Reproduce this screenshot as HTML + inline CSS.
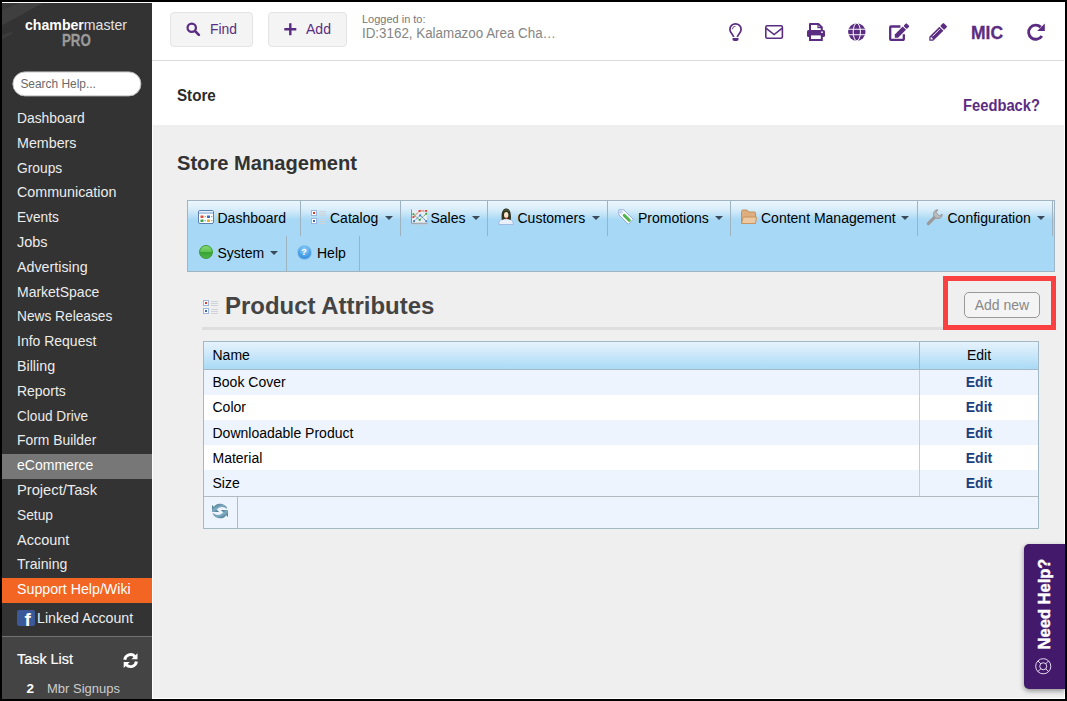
<!DOCTYPE html>
<html>
<head>
<meta charset="utf-8">
<title>Store</title>
<style>
*{box-sizing:border-box;margin:0;padding:0}
html,body{width:1067px;height:701px;overflow:hidden;background:#000;font-family:"Liberation Sans",sans-serif;}
.a{position:absolute}
.sx{display:inline-block;transform-origin:0 50%;white-space:nowrap}
#white{left:2px;top:2px;width:1063px;height:697px;background:#fff}
#side{left:2px;top:3px;width:150px;height:696px;background:#333;overflow:hidden}
#side2{left:0;top:633px;width:150px;height:63px;background:#444;border-top:1px solid #727272}
#grey{left:153px;top:125px;width:911px;height:573px;background:#efefef}
#topline{left:152px;top:60px;width:912px;height:1px;background:#dcdcdc}
.mi{position:absolute;left:0;width:150px;height:25px;padding-left:14.6px;font-size:15px;line-height:22px;color:#ececec;white-space:nowrap}
.btn{position:absolute;top:12px;height:35px;background:#f4f4f4;border:1px solid #e4e4e4;border-radius:4px}
.pt{color:#5b2d82}
svg{position:absolute;overflow:visible}
</style>
</head>
<body>
<div class="a" id="white"></div>
<div class="a" id="grey"></div>
<div class="a" id="topline"></div>

<div class="a" id="side">
<svg style="left:0;top:0" width="60" height="45" viewBox="0 0 60 45"><path d="M0 6.800L16.700 0H40.700L0 22.500Z" fill="#3f3f3f"/><path d="M0 0H16.700L0 6.800Z" fill="#383838"/><path d="M0 32.200L10 28.500L10.700 30.700L0 36Z" fill="#3c3c3c"/></svg>
<div class="a" id="side2"></div>
<div class="a" style="left:23.3px;top:13px;font-size:15px;line-height:17px;color:#fff;white-space:nowrap"><span class="sx" style="transform:scaleX(0.9412)"><b>chamber</b><span style="color:#e4e4e4">master</span></span></div>
<div class="a" style="left:60px;top:28.5px;font-size:17px;line-height:17px;color:#9a9a9a;font-weight:bold;white-space:nowrap;-webkit-text-stroke:0.3px #9a9a9a"><span class="sx" style="transform:scaleX(0.7818)">PRO</span></div>
<div class="a" style="left:10.5px;top:68px;transform:translate(-0.6px,0.4px);width:129px;height:25px;border-radius:13px;background:#fff;border:1px solid #bbb;color:#6a6a6a;font-size:12.5px;line-height:24.2px;padding-left:7.6px"><span class="sx" style="transform:scaleX(0.9532)">Search Help...</span></div>
<div class="mi" style="top:103.8px;"><span class="sx" style="transform:scaleX(0.9226)">Dashboard</span></div>
<div class="mi" style="top:128.8px;"><span class="sx" style="transform:scaleX(0.9518)">Members</span></div>
<div class="mi" style="top:153.8px;"><span class="sx" style="transform:scaleX(0.9189)">Groups</span></div>
<div class="mi" style="top:177.8px;"><span class="sx" style="transform:scaleX(0.9538)">Communication</span></div>
<div class="mi" style="top:202.8px;"><span class="sx" style="transform:scaleX(0.9115)">Events</span></div>
<div class="mi" style="top:227.8px;"><span class="sx" style="transform:scaleX(0.9658)">Jobs</span></div>
<div class="mi" style="top:252.8px;"><span class="sx" style="transform:scaleX(0.9515)">Advertising</span></div>
<div class="mi" style="top:277.8px;"><span class="sx" style="transform:scaleX(0.9324)">MarketSpace</span></div>
<div class="mi" style="top:301.8px;"><span class="sx" style="transform:scaleX(0.9145)">News Releases</span></div>
<div class="mi" style="top:326.8px;"><span class="sx" style="transform:scaleX(0.9323)">Info Request</span></div>
<div class="mi" style="top:351.8px;"><span class="sx" style="transform:scaleX(0.9520)">Billing</span></div>
<div class="mi" style="top:376.8px;"><span class="sx" style="transform:scaleX(0.9291)">Reports</span></div>
<div class="mi" style="top:401.8px;"><span class="sx" style="transform:scaleX(0.9073)">Cloud Drive</span></div>
<div class="mi" style="top:425.8px;"><span class="sx" style="transform:scaleX(0.9248)">Form Builder</span></div>
<div class="mi" style="top:450.8px;background:#777;color:#fff;"><span class="sx" style="transform:scaleX(0.9353)">eCommerce</span></div>
<div class="mi" style="top:475.8px;"><span class="sx" style="transform:scaleX(0.9793)">Project/Task</span></div>
<div class="mi" style="top:500.8px;"><span class="sx" style="transform:scaleX(0.9184)">Setup</span></div>
<div class="mi" style="top:525.8px;"><span class="sx" style="transform:scaleX(0.9668)">Account</span></div>
<div class="mi" style="top:549.8px;"><span class="sx" style="transform:scaleX(0.9378)">Training</span></div>
<div class="mi" style="top:574.8px;background:#f26522;color:#fff;"><span class="sx" style="transform:scaleX(0.9471)">Support Help/Wiki</span></div>
<div class="a" style="left:15px;top:607px;width:18px;height:15.8px;background:#3b5998;border-radius:2px;overflow:hidden"><div class="a" style="left:7.5px;top:-1px;font-size:19px;font-weight:bold;color:#fff;line-height:22px;font-family:'Liberation Sans',sans-serif">f</div></div>
<div class="mi" style="top:604px;left:20.1px"><span class="sx" style="transform:scaleX(0.9455)">Linked Account</span></div>
<div class="a" style="left:15px;top:645px;font-size:14px;line-height:22px;color:#fff;-webkit-text-stroke:0.2px #fff;white-space:nowrap"><span class="sx" style="transform:scaleX(1.0282)">Task List</span></div>
<svg style="left:120.6px;top:650.2px" width="15.2" height="15.2" viewBox="0 0 15 15" fill="none" stroke="#fff" stroke-width="2.9"><path d="M1.700 6.600A5.900 5.900 0 0 1 11.800 3.400"/><path d="M13.300 8.400A5.900 5.900 0 0 1 3.200 11.600"/><path d="M14.300 0.200V6.200H8.300z" fill="#fff" stroke="none"/><path d="M0.700 14.800V8.800H6.700z" fill="#fff" stroke="none"/></svg>
<div class="a" style="left:24.5px;top:677px;font-size:13.5px;line-height:18px;color:#fff;font-weight:bold">2</div>
<div class="a" style="left:45px;top:677px;font-size:13.5px;line-height:18px;color:#ccc;white-space:nowrap"><span class="sx" style="transform:scaleX(0.9632)">Mbr Signups</span></div>
</div>
<div class="btn" style="left:170px;width:83px"></div>
<svg style="left:186px;top:22px" width="14.6" height="14.6" viewBox="0 0 15 15" fill="none" stroke="#5b2d82"><circle cx="5.9" cy="5.9" r="4.3" stroke-width="2.3"/><path d="M9.4 9.4L13.2 13.2" stroke-width="2.8" stroke-linecap="round"/></svg>
<div class="a pt" style="left:210px;top:20px;font-size:15px;line-height:18px"><span class="sx" style="transform:scaleX(0.9253)">Find</span></div>
<div class="btn" style="left:268px;width:79px"></div>
<svg style="left:283.5px;top:22.6px" width="12.6" height="12.6" viewBox="0 0 13 13" stroke="#5b2d82" stroke-width="2.5"><path d="M6.5 0.3V12.7M0.3 6.5H12.7"/></svg>
<div class="a pt" style="left:306px;top:20px;font-size:15px;line-height:18px"><span class="sx" style="transform:scaleX(0.9367)">Add</span></div>
<div class="a" style="left:362px;top:12.5px;font-size:11px;line-height:13px;color:#777;white-space:nowrap"><span class="sx" style="transform:scaleX(0.9983)">Logged in to:</span></div>
<div class="a" style="left:362px;top:25px;font-size:14px;line-height:16px;color:#858585;white-space:nowrap"><span class="sx" style="transform:scaleX(0.9551)">ID:3162, Kalamazoo Area Cha…</span></div>
<svg id="i-bulb" style="left:729px;top:23px" width="13" height="18" viewBox="0 0 13 18"><path d="M4.600 14C4.400 11.600 0.900 9.900 0.900 6.400A5.600 5.600 0 0 1 12.100 6.400C12.100 9.900 8.600 11.600 8.400 14" fill="none" stroke="#5b2d82" stroke-width="1.700"/><path d="M3.500 15.100H9.500V16.200C9.500 17.300 8.700 17.900 7.600 17.900H5.400C4.300 17.900 3.500 17.300 3.500 16.200Z" fill="#5b2d82"/><path d="M3.400 6.300A3.100 3.100 0 0 1 6.500 3.300" fill="none" stroke="#5b2d82" stroke-width="0.900"/></svg>
<svg id="i-env" style="left:765px;top:25px" width="18.200" height="14" viewBox="0 0 18.200 14" fill="none" stroke="#5b2d82" stroke-width="1.600"><rect x="0.800" y="0.800" width="16.600" height="12.400" rx="1.500"/><path d="M1.200 3.400L9.100 9.600L17 3.400"/></svg>
<svg id="i-print" style="left:807px;top:23px" width="18" height="18" viewBox="0 0 18 18"><path d="M3 1H11.400L14.800 4.200V8.500H3Z" fill="#fff" stroke="#5b2d82" stroke-width="2" stroke-linejoin="round"/><path d="M11 1V4.600H14.800" fill="none" stroke="#5b2d82" stroke-width="1.200"/><rect x="0" y="7" width="18" height="7" rx="1.600" fill="#5b2d82"/><rect x="3" y="11.400" width="11.800" height="5.600" fill="#fff" stroke="#5b2d82" stroke-width="2"/><circle cx="15" cy="9.200" r="0.900" fill="#fff"/></svg>
<svg id="i-globe" style="left:848px;top:23px" width="17.600" height="18" viewBox="0 0 18 18"><circle cx="9" cy="9" r="8.900" fill="#5b2d82"/><g fill="none" stroke="#fff" stroke-width="1"><ellipse cx="9" cy="9" rx="3.700" ry="9"/><path d="M0 6.200H18M0 11.800H18"/></g></svg>
<svg id="i-edit" style="left:889px;top:23px" width="21" height="18" viewBox="0 0 21 18"><path d="M11.400 3.500H1.900A0.700 0.700 0 0 0 1.200 4.200V16.100A0.700 0.700 0 0 0 1.900 16.800H14.100A0.700 0.700 0 0 0 14.800 16.100V11.200" fill="none" stroke="#5b2d82" stroke-width="2.300"/><g transform="translate(5.800 14.700) rotate(-45)" fill="#5b2d82"><path d="M0 0L2.300 -2.300H13.500V2.300H2.300Z"/><rect x="14.500" y="-2.300" width="4" height="4.600" rx="0.900"/></g></svg>
<svg id="i-pencil" style="left:929px;top:23px" width="18.500" height="18" viewBox="0 0 18.500 18"><g transform="translate(0.300 17.800) rotate(-45)" fill="#5b2d82"><path d="M0 0L2.800 -2.800H17.100V2.800H2.800Z"/><rect x="18.100" y="-2.800" width="4.700" height="5.600" rx="1"/><path d="M1.700 0L3.900 -1.800V1.800Z" fill="#fff"/><path d="M5.500 -0.900H16" stroke="#fff" stroke-width="0.900"/></g></svg>
<div class="a pt" style="left:970.8px;top:23.2px;font-size:17.5px;font-weight:bold;line-height:20px;white-space:nowrap;-webkit-text-stroke:0.3px #5b2d82"><span class="sx" style="transform:scaleX(0.9976)">MIC</span></div>
<svg id="i-redo" style="left:1027px;top:23px" width="18" height="18" viewBox="0 0 18 18"><path d="M14.800 12.900A7.100 7.100 0 1 1 13.700 4.100" fill="none" stroke="#5b2d82" stroke-width="2.900"/><path d="M17.800 0.400V8H10.200Z" fill="#5b2d82"/></svg>
<div class="a" style="left:177px;top:86px;font-size:16px;font-weight:bold;line-height:20px;color:#2b2b2b;white-space:nowrap"><span class="sx" style="transform:scaleX(0.9487)">Store</span></div>
<div class="a pt" style="left:963px;top:96px;font-size:16px;font-weight:bold;line-height:20px;white-space:nowrap"><span class="sx" style="transform:scaleX(0.9212)">Feedback?</span></div>
<div class="a" style="left:177px;top:151px;font-size:20.5px;font-weight:bold;line-height:24px;color:#333;white-space:nowrap"><span class="sx" style="transform:scaleX(0.9815)">Store Management</span></div>
<div class="a" id="menubar" style="left:187px;top:200px;width:868px;height:72px;border:1px solid #9fb5c3;background:#a7d8f5 linear-gradient(#edf6fd 0,#d7ecfa 9px,#a7d8f5 19px)"></div>
<div class="a" style="left:300px;top:201px;width:1px;height:35px;background:#9db3c0"></div>
<div class="a" style="left:400px;top:201px;width:1px;height:35px;background:#9db3c0"></div>
<div class="a" style="left:487px;top:201px;width:1px;height:35px;background:#9db3c0"></div>
<div class="a" style="left:607px;top:201px;width:1px;height:35px;background:#9db3c0"></div>
<div class="a" style="left:730px;top:201px;width:1px;height:35px;background:#9db3c0"></div>
<div class="a" style="left:917px;top:201px;width:1px;height:35px;background:#9db3c0"></div>
<div class="a" style="left:1052px;top:201px;width:1px;height:35px;background:#9db3c0"></div>
<div class="a" style="left:286px;top:236px;width:1px;height:35px;background:#9db3c0"></div>
<div class="a" style="left:359px;top:236px;width:1px;height:35px;background:#9db3c0"></div>
<div class="a" style="left:217.5px;top:210px;font-size:14px;line-height:16px;color:#000;white-space:nowrap">Dashboard</div>
<div class="a" style="left:330px;top:210px;font-size:14px;line-height:16px;color:#000;white-space:nowrap">Catalog</div>
<div class="a" style="left:384.5px;top:215.5px;width:0;height:0;border-left:4.5px solid transparent;border-right:4.5px solid transparent;border-top:4.5px solid #3a4b5c"></div>
<div class="a" style="left:430.5px;top:210px;font-size:14px;line-height:16px;color:#000;white-space:nowrap">Sales</div>
<div class="a" style="left:471.5px;top:215.5px;width:0;height:0;border-left:4.5px solid transparent;border-right:4.5px solid transparent;border-top:4.5px solid #3a4b5c"></div>
<div class="a" style="left:517.5px;top:210px;font-size:14px;line-height:16px;color:#000;white-space:nowrap">Customers</div>
<div class="a" style="left:591.5px;top:215.5px;width:0;height:0;border-left:4.5px solid transparent;border-right:4.5px solid transparent;border-top:4.5px solid #3a4b5c"></div>
<div class="a" style="left:638px;top:210px;font-size:14px;line-height:16px;color:#000;white-space:nowrap">Promotions</div>
<div class="a" style="left:714.5px;top:215.5px;width:0;height:0;border-left:4.5px solid transparent;border-right:4.5px solid transparent;border-top:4.5px solid #3a4b5c"></div>
<div class="a" style="left:761px;top:210px;font-size:14px;line-height:16px;color:#000;white-space:nowrap">Content Management</div>
<div class="a" style="left:901px;top:215.5px;width:0;height:0;border-left:4.5px solid transparent;border-right:4.5px solid transparent;border-top:4.5px solid #3a4b5c"></div>
<div class="a" style="left:947.5px;top:210px;font-size:14px;line-height:16px;color:#000;white-space:nowrap">Configuration</div>
<div class="a" style="left:1036.5px;top:215.5px;width:0;height:0;border-left:4.5px solid transparent;border-right:4.5px solid transparent;border-top:4.5px solid #3a4b5c"></div>
<div class="a" style="left:217.5px;top:245px;font-size:14px;line-height:16px;color:#000;white-space:nowrap">System</div>
<div class="a" style="left:270px;top:250.5px;width:0;height:0;border-left:4.5px solid transparent;border-right:4.5px solid transparent;border-top:4.5px solid #3a4b5c"></div>
<div class="a" style="left:317px;top:245px;font-size:14px;line-height:16px;color:#000;white-space:nowrap">Help</div>
<svg style="left:198px;top:210px" width="16" height="14" viewBox="0 0 16 14"><rect x="0.5" y="0.5" width="15" height="13" rx="1.500" fill="#fff" stroke="#5b7fae"/><rect x="1" y="1" width="14" height="3" fill="#b3cbe9"/><rect x="1" y="1" width="14" height="1" fill="#e6eef8"/><rect x="2.500" y="5.500" width="3" height="2.500" fill="#e04b3a"/><rect x="2.500" y="9.500" width="3" height="2.500" fill="#3fa447"/><rect x="9" y="5.500" width="3" height="2.500" fill="#3b6fc4"/><rect x="9" y="9.500" width="3" height="2.500" fill="#f0a92c"/><path d="M6.500 6.700H8M6.500 10.700H8M13 6.700H14.500M13 10.700H14.500" stroke="#999" stroke-width="1"/></svg>
<svg style="left:311px;top:210px" width="15" height="14" viewBox="0 0 15 14" shape-rendering="crispEdges"><rect x="0.5" y="0.5" width="5" height="5" fill="#fff" stroke="#9db5db"/><rect x="2" y="2" width="2" height="2" fill="#e0392b"/><rect x="0.5" y="8.500" width="5" height="5" fill="#fff" stroke="#9db5db"/><rect x="2" y="10" width="2" height="2" fill="#3a67c0"/><g fill="#cdd3d9"><rect x="8" y="1" width="7" height="1"/><rect x="8" y="3" width="7" height="1"/><rect x="8" y="5" width="7" height="1"/><rect x="8" y="9" width="7" height="1"/><rect x="8" y="11" width="7" height="1"/><rect x="8" y="13" width="7" height="1"/></g></svg>
<svg style="left:411px;top:209px" width="17" height="16" viewBox="0 0 17 16" fill="none"><rect x="0.500" y="0.700" width="15.500" height="13.800" fill="#e6edf3"/><path d="M0.500 0.500V14.300H16.500" stroke="#8f9396" stroke-width="1"/><path d="M0.500 15.200H16.500" stroke="#c3c8cc" stroke-width="0.800"/><g stroke-width="1" stroke-dasharray="1.600 0.700"><path d="M2.400 8.100L8.600 1.900H15.400" stroke="#e04a33"/><path d="M2.400 5.200L8.600 10.900L15.400 4.700" stroke="#3da544"/><path d="M3 12.200L9.200 6.400L15.400 12.200" stroke="#4b83cf"/></g><g><rect x="1.500" y="7.200" width="1.800" height="1.800" fill="#e0392b"/><rect x="7.700" y="1" width="1.800" height="1.800" fill="#e0392b"/><rect x="14.300" y="1" width="1.800" height="1.800" fill="#e0392b"/><rect x="1.500" y="4.300" width="1.800" height="1.800" fill="#2f9e3a"/><rect x="7.700" y="10" width="1.800" height="1.800" fill="#2f9e3a"/><rect x="14.300" y="3.800" width="1.800" height="1.800" fill="#2f9e3a"/><rect x="2.100" y="11.300" width="1.800" height="1.800" fill="#3b74c6"/><rect x="8.300" y="5.500" width="1.800" height="1.800" fill="#3b74c6"/><rect x="14.300" y="11.300" width="1.800" height="1.800" fill="#3b74c6"/></g></svg>
<svg style="left:498px;top:208px" width="16" height="17" viewBox="0 0 16 17"><path d="M0.700 16.500C0.700 12.300 3.200 10.900 8 10.900S15.300 12.300 15.300 16.500Z" fill="#eaf0fa" stroke="#a3bbe0"/><path d="M3.800 12C2.900 4 5 0.600 8.300 0.600S13.600 4 12.800 12L10 11H6.400Z" fill="#2f3320"/><path d="M5.400 3.200C6.400 1.700 9.700 1.500 11 3.200" stroke="#56673a" stroke-width="0.900" fill="none"/><ellipse cx="8.200" cy="7" rx="2.200" ry="2.900" fill="#fbe3cf"/><path d="M6.900 9.600L8.200 11.300L9.500 9.600Z" fill="#f2663a"/></svg>
<svg style="left:618px;top:209px" width="16" height="16" viewBox="0 0 16 16"><path d="M0.800 0.800H5.800L15.300 10.300L10.300 15.300L0.800 5.800Z" fill="#f6f9fe" stroke="#93aedb" stroke-linejoin="round"/><circle cx="3.300" cy="3.300" r="1" fill="#fff" stroke="#93aedb" stroke-width="0.700"/><path d="M6.200 6.200L11.300 11.300" stroke="#3faa3a" stroke-width="2.900" stroke-linecap="round"/><path d="M6 5.600L11.800 11.400" stroke="#7fd472" stroke-width="0.800" stroke-linecap="round"/></svg>
<svg style="left:741px;top:208.500px" width="16" height="16" viewBox="0 0 16 16"><path d="M0.500 2.500A1.500 1.500 0 0 1 2 1H6L7.500 3H13.500A1 1 0 0 1 14.500 4V14.500H0.500Z" fill="#dfae7e" stroke="#c48f5b"/><path d="M0.500 14.500L2.300 8H15.500L14.500 14.500Z" fill="#ecc9a3" stroke="#c8955f"/></svg>
<svg style="left:927px;top:209px" width="16" height="16" viewBox="0 0 16 16"><path d="M1.300 14.700L8.800 7.200" stroke="#9a9a9a" stroke-width="3.200" stroke-linecap="round"/><path d="M10.800 0.800A4.300 4.300 0 1 0 15.200 5.200L12.400 7L9 3.600Z" fill="#bdbdbd" stroke="#8a8a8a" stroke-width="0.800"/></svg>
<div class="a" style="left:199px;top:245px;width:14px;height:14px;border-radius:50%;background:linear-gradient(#86d873 0,#5cc24f 50%,#3aa336 54%,#4cb545 100%);border:1px solid #3a9a36"></div>
<div class="a" style="left:296.500px;top:244.500px;width:15px;height:15px;border-radius:50%;background:radial-gradient(circle at 50% 30%,#9ad6fc 0,#4aa0e6 55%,#2f7fd0 100%);border:1.500px solid #86c6f2;color:#fff;font-size:9px;font-weight:bold;line-height:12px;text-align:center">?</div>
<svg style="left:203px;top:300px" width="15" height="14" viewBox="0 0 15 14" shape-rendering="crispEdges"><rect x="0.5" y="0.5" width="5" height="5" fill="#fff" stroke="#9db5db"/><rect x="2" y="2" width="2" height="2" fill="#e0392b"/><rect x="0.5" y="8.500" width="5" height="5" fill="#fff" stroke="#9db5db"/><rect x="2" y="10" width="2" height="2" fill="#3a67c0"/><g fill="#cdd3d9"><rect x="8" y="1" width="7" height="1"/><rect x="8" y="3" width="7" height="1"/><rect x="8" y="5" width="7" height="1"/><rect x="8" y="9" width="7" height="1"/><rect x="8" y="11" width="7" height="1"/><rect x="8" y="13" width="7" height="1"/></g></svg>
<div class="a" style="left:225px;top:292px;font-size:23px;font-weight:bold;line-height:28px;color:#444;white-space:nowrap"><span class="sx" style="transform:scaleX(1.0411)">Product Attributes</span></div>
<div class="a" style="left:202px;top:327px;width:838.500px;height:3px;background:#dedede"></div>
<div class="a" style="left:964px;top:292px;width:76px;height:26px;border:1px solid #999;border-radius:5px;background:#f4f4f4;color:#888;font-size:14px;line-height:24px;text-align:center">Add new</div>
<div class="a" style="left:943px;top:276px;width:113px;height:54px;border:5px solid #fa4040"></div>
<div class="a" style="left:203px;top:341px;width:836px;height:187.500px;border:1px solid #a4b9c6;background:#edf4fd"></div>
<div class="a" style="left:204px;top:342px;width:834px;height:28px;background:linear-gradient(#e6f3fc 0,#cfe9fa 40%,#a9daf6 100%);border-bottom:1px solid #a4b9c6"></div>
<div class="a" style="left:204px;top:369.5px;width:834px;height:25.1px;background:#edf4fd"></div>
<div class="a" style="left:212.500px;top:373.6px;font-size:14px;line-height:16px;color:#000;white-space:nowrap">Book Cover</div>
<div class="a" style="left:919px;top:373.6px;width:120px;text-align:center;font-size:14px;font-weight:bold;line-height:16px;color:#1b3f7e">Edit</div>
<div class="a" style="left:204px;top:394.6px;width:834px;height:25.1px;background:#fff"></div>
<div class="a" style="left:212.500px;top:398.6px;font-size:14px;line-height:16px;color:#000;white-space:nowrap">Color</div>
<div class="a" style="left:919px;top:398.6px;width:120px;text-align:center;font-size:14px;font-weight:bold;line-height:16px;color:#1b3f7e">Edit</div>
<div class="a" style="left:204px;top:419.7px;width:834px;height:25.2px;background:#edf4fd"></div>
<div class="a" style="left:212.500px;top:424.6px;font-size:14px;line-height:16px;color:#000;white-space:nowrap">Downloadable Product</div>
<div class="a" style="left:919px;top:424.6px;width:120px;text-align:center;font-size:14px;font-weight:bold;line-height:16px;color:#1b3f7e">Edit</div>
<div class="a" style="left:204px;top:444.9px;width:834px;height:25.4px;background:#fff"></div>
<div class="a" style="left:212.500px;top:449.7px;font-size:14px;line-height:16px;color:#000;white-space:nowrap">Material</div>
<div class="a" style="left:919px;top:449.7px;width:120px;text-align:center;font-size:14px;font-weight:bold;line-height:16px;color:#1b3f7e">Edit</div>
<div class="a" style="left:204px;top:470.3px;width:834px;height:25.7px;background:#edf4fd"></div>
<div class="a" style="left:212.500px;top:474.6px;font-size:14px;line-height:16px;color:#000;white-space:nowrap">Size</div>
<div class="a" style="left:919px;top:474.6px;width:120px;text-align:center;font-size:14px;font-weight:bold;line-height:16px;color:#1b3f7e">Edit</div>
<div class="a" style="left:212.500px;top:347px;font-size:14px;line-height:16px;color:#000">Name</div>
<div class="a" style="left:919px;top:347px;width:120px;text-align:center;font-size:14px;line-height:16px;color:#000">Edit</div>
<div class="a" style="left:919px;top:342px;width:1px;height:28px;background:#a4b9c6"></div>
<div class="a" style="left:919px;top:370px;width:1px;height:126px;background:#c6cdd4"></div>
<div class="a" style="left:204px;top:496px;width:834px;height:1px;background:#b4b9bd"></div>
<div class="a" style="left:237px;top:497px;width:1px;height:31px;background:#b4b9bd"></div>
<svg style="left:212px;top:502.700px" width="16" height="16" viewBox="0 0 16 16"><defs><linearGradient id="rg" x1="0" y1="0" x2="1" y2="1"><stop offset="0" stop-color="#3f6b83"/><stop offset="0.500" stop-color="#80adc2"/><stop offset="1" stop-color="#3d687f"/></linearGradient></defs><g fill="url(#rg)"><path d="M1.300 4.600A7.800 7.800 0 0 1 15.400 5.900A7.500 7.500 0 0 0 4.600 6.800Z"/><path d="M0 2V9.100H7.100Z"/><g transform="rotate(180 8 8)"><path d="M1.300 4.600A7.800 7.800 0 0 1 15.400 5.900A7.500 7.500 0 0 0 4.600 6.800Z"/><path d="M0 2V9.100H7.100Z"/></g></g></svg>
<div class="a" style="left:1024px;top:544px;width:41px;height:145px;background:#43196c;border-radius:5px 0 0 5px;box-shadow:0 2px 5px rgba(0,0,0,.4)"></div>
<div class="a" style="left:1043.600px;top:604px;width:0;height:0"><div style="position:absolute;left:-60px;top:-12px;width:120px;height:24px;transform:rotate(-90deg);color:#fff;font-size:16.500px;font-weight:bold;line-height:24px;text-align:center;white-space:nowrap;-webkit-text-stroke:0.45px #fff">Need Help?</div></div>
<svg style="left:1035.400px;top:657.600px" width="16.500" height="16.500" viewBox="0 0 17 17" fill="none" stroke="#e9dff3" stroke-width="1"><circle cx="8.500" cy="8.500" r="7.800"/><circle cx="8.500" cy="8.500" r="3.600"/><path d="M3 3L6 6M14 3L11 6M3 14L6 11M14 14L11 11"/></svg>
</body>
</html>
